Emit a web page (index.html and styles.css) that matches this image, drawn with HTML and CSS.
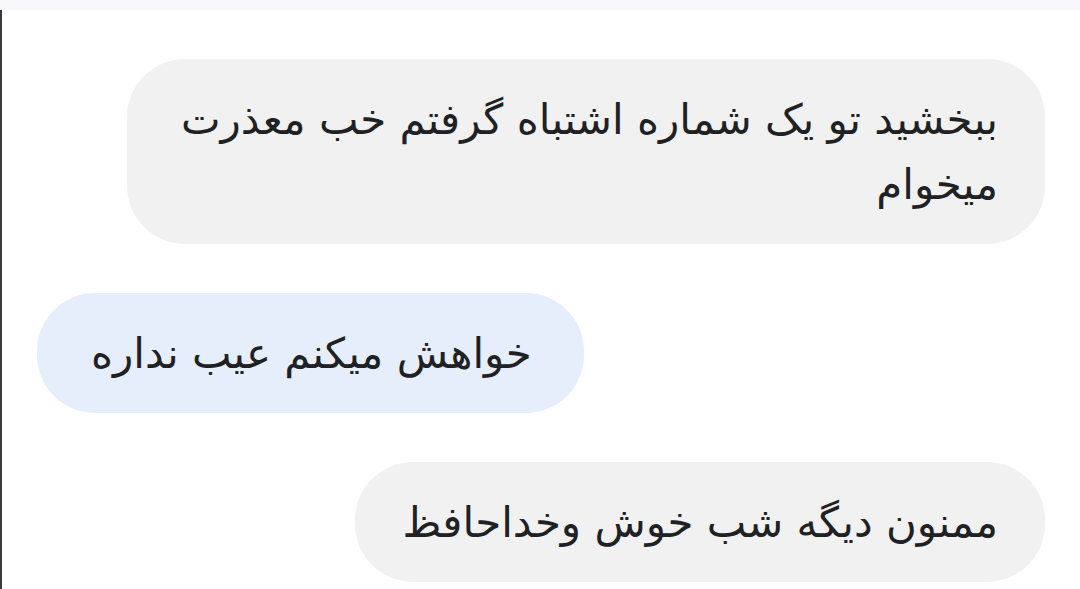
FILE: index.html
```html
<!DOCTYPE html>
<html lang="fa">
<head>
<meta charset="utf-8">
<link rel="stylesheet" href="styles.css">
</head>
<body>
<div class="topbar"></div>
<div class="chat" dir="rtl">
  <div class="msg in">ببخشید تو یک شماره اشتباه گرفتم خب معذرت میخوام</div>
  <div class="msg out">خواهش میکنم عیب نداره</div>
  <div class="msg in">ممنون دیگه شب خوش وخداحافظ</div>
</div>
</body>
</html>
```
FILE: styles.css
```css
html, body {
  margin: 0;
  padding: 0;
  background: #ffffff;
  width: 1080px;
  height: 589px;
  overflow: hidden;
}
.topbar {
  height: 10px;
  background: #f6f8fc;
}
.chat {
  height: 579px;
  border-left: 2px solid #3a3a3a;
  box-sizing: border-box;
  display: flex;
  flex-direction: column;
  align-items: flex-start;
  gap: 49px;
  padding: 49px 35px 0 35px;
  font-family: "DejaVu Sans", sans-serif;
  font-size: 42px;
  color: #202124;
}
.msg {
  box-sizing: border-box;
  max-width: 918px;
  padding: 27.5px 47px 27.5px 47px;
  line-height: 65px;
  border-radius: 58px;
  background: #f1f1f1;
}
.msg.out {
  align-self: flex-end;
  background: #e7eefb;
  padding-right: 52px;
  padding-left: 54px;
}
```
